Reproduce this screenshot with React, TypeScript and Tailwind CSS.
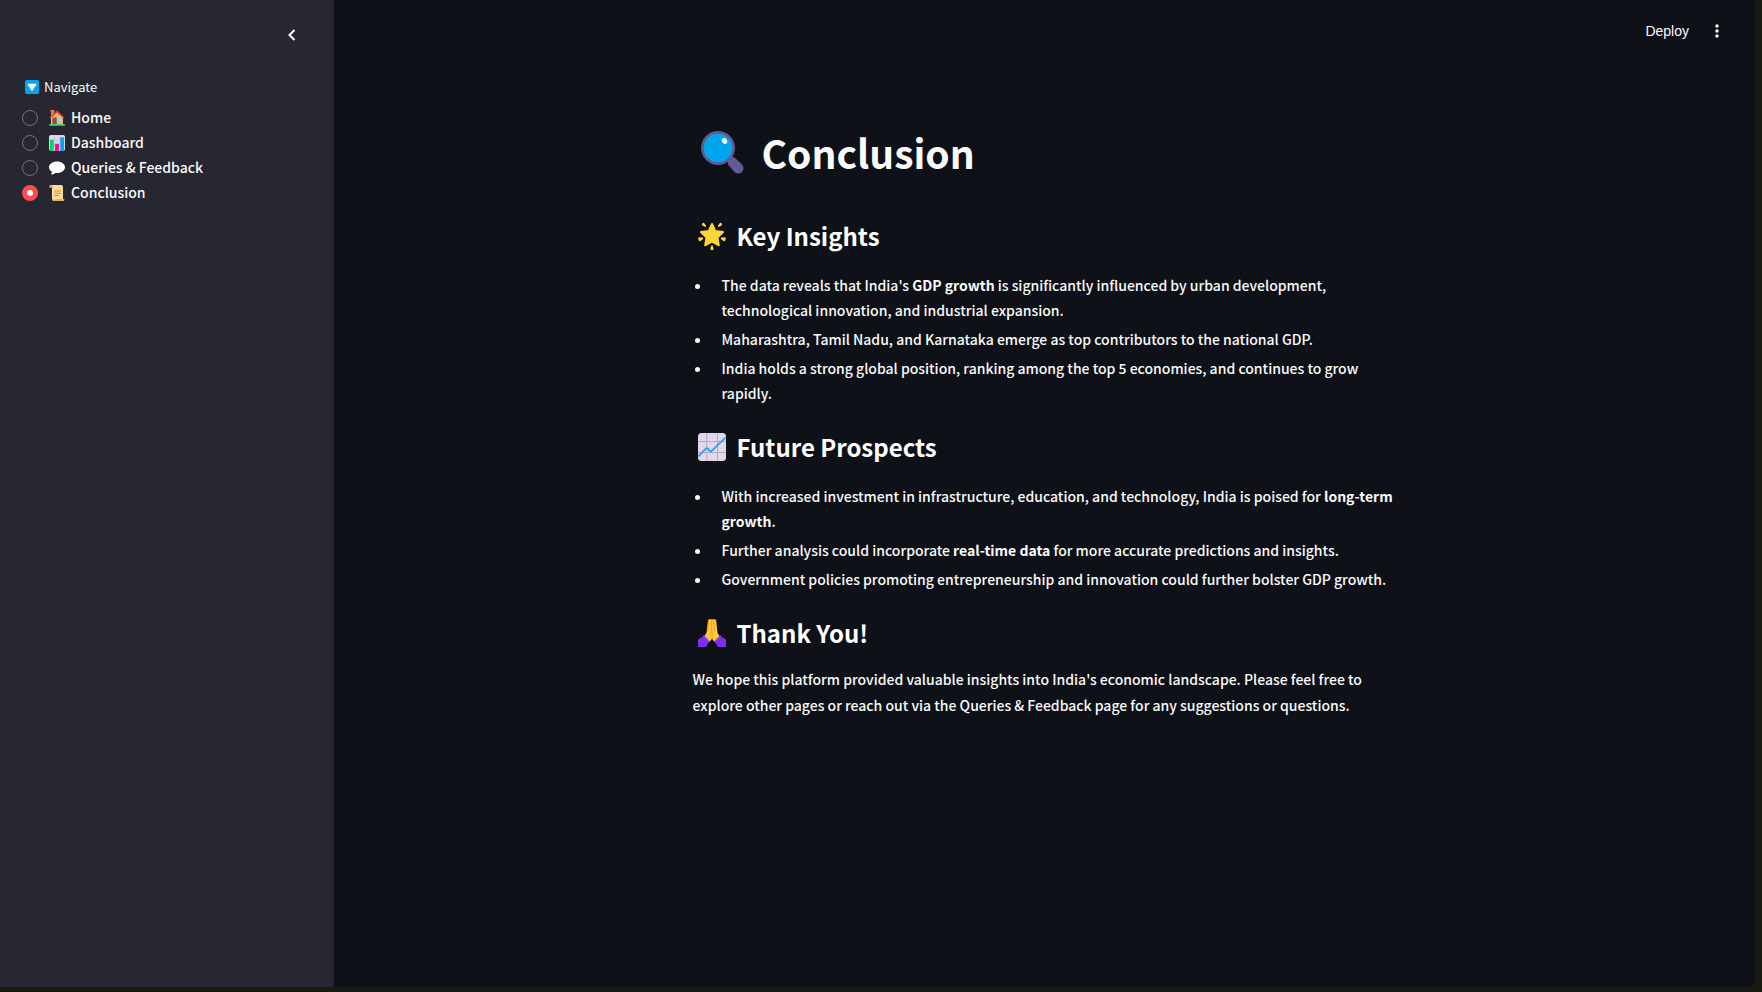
import { useState, type ReactNode } from "react";

function NavigateIcon() {
  return (
    <svg viewBox="0 0 32 32" className="size-[14px] shrink-0" aria-hidden="true">
      <rect width="32" height="32" rx="4" fill="#00a6ed" />
      <path d="M7 8.500h18c1 0 1.400.8.900 1.600l-8.700 14.400c-.6.800-1.800.800-2.400 0L6.100 10.100C5.600 9.300 6 8.500 7 8.500z" fill="#fff" />
    </svg>
  );
}

function HomeIcon() {
  return (
    <svg viewBox="0 0 32 32" className="size-4 shrink-0" aria-hidden="true">
      <path d="M4 15 16 4l12 11v14H4z" fill="#ffb161" />
      <path d="M1 15 15 1.500c.6-.6 1.400-.6 2 0L31 15l-1.600 2L16 4.500 2.600 17z" fill="#f8312f" />
      <path d="M4 2.500h6v5.200l-6 5.800z" fill="#d67d53" />
      <rect x="3" y="0" width="8" height="3.500" rx="1" fill="#ff8257" />
      <rect x="7" y="15" width="8.500" height="14" fill="#8a5140" />
      <rect x="18" y="15" width="7.500" height="7.500" rx="1" fill="#8fd4ff" />
      <rect x="0" y="28" width="32" height="3.500" rx="1.500" fill="#44d18a" />
    </svg>
  );
}

function DashboardIcon() {
  return (
    <svg viewBox="0 0 32 32" className="size-4 shrink-0" aria-hidden="true">
      <rect width="32" height="32" rx="4" fill="#e1d8ec" />
      <path d="M0 10h32M0 22h32M10.500 0v32M21.500 0v32" stroke="#b4acbc" strokeWidth="1" />
      <path d="M2 9.500h7.500V32H4c-1.200 0-2-.8-2-2z" fill="#00d26a" />
      <path d="M12.200 17.500h7.600V32h-7.600z" fill="#f70a8d" />
      <path d="M22.500 4.500H30V30c0 1.200-.8 2-2 2h-5.500z" fill="#00a6ed" />
    </svg>
  );
}

function SpeechIcon() {
  return (
    <svg viewBox="0 0 32 32" className="size-4 shrink-0" aria-hidden="true">
      <path d="M16 3C7 3 0 8 0 14.500c0 3.800 2.300 7 6 9.100 0 1.600-.7 3-1.600 4-.5.6 0 1.400.8 1.300 3.200-.3 5.700-1.600 7.400-3.100 1.100.2 2.200.2 3.400.2 9 0 16-5 16-11.500S25 3 16 3z" fill="#fff" />
    </svg>
  );
}

function ScrollIcon() {
  return (
    <svg viewBox="0 0 32 32" className="size-4 shrink-0" aria-hidden="true">
      <path d="M1 3.500C1 1.600 2.500 0 4.500 0H24c2.200 0 4 1.800 4 4v24H10c-2.200 0-4-1.800-4-4V5H2C1.400 5 1 4.500 1 3.500z" fill="#ffdb9a" />
      <path d="M1 3.500C1 1.600 2.500 0 4.500 0S8 1.600 8 3.500V5H2c-.6 0-1-.6-1-1.500z" fill="#e8ab62" />
      <path d="M11 12h12M11 16.500h12M11 21h8" stroke="#d3883e" strokeWidth="1.800" strokeLinecap="round" />
      <path d="M12 28h18c.6 0 1 .5 1 1 0 1.700-1.500 3-3.200 3H9c2 0 3-1.600 3-4z" fill="#f3ad61" />
      <path d="M6 24c0 4 .500 8 3.500 8 1.800 0 2.500-1.500 2.500-3.500V27z" fill="#ffdb9a" />
    </svg>
  );
}

function MagnifierIcon() {
  return (
    <svg viewBox="0 0 43 43" className="size-[43px] shrink-0" aria-hidden="true">
      <path d="m29 30 4-4 8 7.500a5.300 5.300 0 0 1-7.500 7.500l-7-8z" fill="#635994" />
      <path d="m26 27 3-3 5 3.500-6.500 6.500z" fill="#635994" />
      <circle cx="17" cy="17" r="17" fill="#635994" />
      <circle cx="17" cy="17" r="14.300" fill="#00a6ed" />
      <ellipse cx="23.500" cy="10" rx="2.500" ry="3.100" transform="rotate(-30 23.500 10)" fill="#fff" />
    </svg>
  );
}

function StarIcon() {
  return (
    <svg viewBox="0 0 28 28" className="size-7 shrink-0" aria-hidden="true">
      <g fill="#ffd43b">
        <path
          d="m14 2 3.300 7 7.700 1-5.500 5.500 1.300 7.800L14 19.700l-6.800 3.600 1.300-7.800L3 10l7.700-1z"
          stroke="#ffd43b"
          strokeWidth="2"
          strokeLinejoin="round"
        />
        <path d="M4.300 1.600c.3-.9 1.200-1.100 1.800-.6L8 3.400c.5.900-.4 1.800-1.300 1.400L4.400 3.500c-.6-.4-.4-1.100-.1-1.900z" />
        <path d="M23.700 1.600c-.3-.9-1.200-1.100-1.800-.6L20 3.400c-.5.900.4 1.800 1.300 1.400l2.300-1.300c.6-.4.4-1.100.1-1.900z" />
        <path d="M.3 16.800c-.3-.9.300-1.500 1-1.500l2.900.2c1 .2 1.200 1.300.4 1.900l-2.300 1.700c-.7.400-1.400.2-1.600-.5z" />
        <path d="M27.700 16.800c.3-.9-.3-1.500-1-1.500l-2.900.2c-1 .2-1.200 1.300-.4 1.900l2.300 1.700c.7.400 1.400.2 1.600-.5z" />
        <path d="M14 28c-1.200 0-1.800-.6-1.600-1.300l.7-2.700c.3-.9 1.500-.9 1.800 0l.7 2.700c.2.700-.4 1.300-1.600 1.300z" />
      </g>
    </svg>
  );
}

function TrendIcon() {
  return (
    <svg viewBox="0 0 28 28" className="size-7 shrink-0" aria-hidden="true">
      <rect width="28" height="28" rx="3.500" fill="#e1d8ec" />
      <path d="M0 8.500h28M0 19.500h28M8.800 0v28M19.500 0v28" stroke="#b4acbc" strokeWidth="1" />
      <path d="m.4 23.300 7.400-7.600c.6-.6 1.400-.6 2 0l2.200 2.300c.5.400 1 .4 1.500 0L27.800 4.300" fill="none" stroke="#26a0f0" strokeWidth="1.700" />
    </svg>
  );
}

function HandsIcon() {
  return (
    <svg viewBox="0 0 28 28" className="size-7 shrink-0" aria-hidden="true">
      <path d="M10 1.500C10.500.3 12 0 13 .6c.6-.6 1.700-.6 2.300 0 1-.6 2.400-.3 2.900.9l1.300 12.300 2.300 4-5.500 5-2.300-3-2.300 3-5.700-5 2.500-4z" fill="#ffc83d" />
      <path d="M10.600 2c-.6 3.500-.5 7-.5 10M13.500 1v10c0 2-.4 3.700-1.500 5M15.500 1.500c1 3 1.300 6 1.300 10M14.200 13v6" fill="none" stroke="#f59f0a" strokeWidth=".9" strokeLinecap="round" />
      <path d="M5.800 17 11 22.500 8.500 27c-.4.700-1 1-1.800 1H0v-7.500z" fill="#7d2df2" />
      <path d="m22.200 17-5.400 5.500 2.500 4.500c.4.700 1 1 1.800 1H28v-7.500z" fill="#7d2df2" />
      <path d="m5.800 17 5.200 5.500M22.200 17l-5.400 5.500" stroke="#8b4cf7" strokeWidth="1.600" strokeLinecap="round" />
    </svg>
  );
}

const pages = [
  { name: "Home", icon: <HomeIcon /> },
  { name: "Dashboard", icon: <DashboardIcon /> },
  { name: "Queries & Feedback", icon: <SpeechIcon /> },
  { name: "Conclusion", icon: <ScrollIcon /> },
];

function Sidebar() {
  const [page, setPage] = useState("Conclusion");
  return (
    <aside className="w-[334px] shrink-0 bg-[#262730] px-[22px]">
      <div className="flex justify-end pt-[25px] pr-[10px]">
        <button type="button" aria-label="Collapse sidebar" className="flex size-5 items-center justify-center">
          <svg viewBox="0 0 20 20" className="size-5" fill="none" stroke="#fafafa" strokeWidth="2" aria-hidden="true">
            <path d="m12.500 5-5 5 5 5" />
          </svg>
        </button>
      </div>
      <fieldset className="mt-8">
        <legend className="flex h-5 items-center gap-[5px] pl-[3px] text-[13px] leading-5">
          <NavigateIcon />
          Navigate
        </legend>
        <div className="mt-2 flex flex-col">
          {pages.map(({ name, icon }) => (
            <label key={name} className="flex h-[25px] items-center text-[14px] leading-[25px] font-medium">
              <input
                type="radio"
                name="page"
                checked={page === name}
                onChange={() => setPage(name)}
                className="mr-[11px] size-4 shrink-0 appearance-none rounded-full border border-[#72737b] bg-[#262730] checked:border-[5px] checked:border-[#ff4b4b] checked:bg-white"
              />
              {icon}
              <span className="ml-[6px]">{name}</span>
            </label>
          ))}
        </div>
      </fieldset>
    </aside>
  );
}

function Section({ icon, title, children }: { icon: ReactNode; title: string; children: ReactNode }) {
  return (
    <section>
      <h2 className="flex h-9 items-center gap-[11px] pl-[5px] text-[24px] leading-9 font-bold text-white">
        {icon}
        {title}
      </h2>
      {children}
    </section>
  );
}

function Bullets({ children }: { children: ReactNode }) {
  return (
    <ul className="mt-[19px] flex list-disc flex-col gap-1 pl-[19px] text-[14px] leading-[25px] font-medium *:pl-[10px]">
      {children}
    </ul>
  );
}

export default function App() {
  return (
    <div className="flex min-h-screen bg-[#181a12] pr-[7px] pb-[5px] font-['Noto_Sans_CJK_SC','Noto_Sans',sans-serif] text-[#fafafa]">
      <Sidebar />
      <div className="flex min-w-0 flex-1 flex-col rounded-br-md bg-[#0e1117]">
        <header className="flex h-[62px] items-center justify-end gap-5 pr-[30px] font-['Liberation_Sans',sans-serif] text-sm">
          <button type="button">Deploy</button>
          <button type="button" aria-label="Main menu" className="flex size-4 items-center justify-center">
            <svg viewBox="0 0 16 16" className="size-4" fill="#fafafa" aria-hidden="true">
              <circle cx="8" cy="3" r="1.700" />
              <circle cx="8" cy="8" r="1.700" />
              <circle cx="8" cy="13" r="1.700" />
            </svg>
          </button>
        </header>
        <main className="mx-auto w-full max-w-[704px] pt-[61px]">
          <h1 className="flex h-[58px] items-center gap-[18px] pl-2 text-[39px] leading-[58px] font-bold">
            <MagnifierIcon />
            Conclusion
          </h1>
          <div className="mt-[37px] flex flex-col gap-[23px]">
            <Section icon={<StarIcon />} title="Key Insights">
              <Bullets>
                <li>
                  The data reveals that India's <strong>GDP growth</strong> is significantly influenced by urban
                  development, technological innovation, and industrial expansion.
                </li>
                <li>Maharashtra, Tamil Nadu, and Karnataka emerge as top contributors to the national GDP.</li>
                <li>
                  India holds a strong global position, ranking among the top 5 economies, and continues to grow
                  rapidly.
                </li>
              </Bullets>
            </Section>
            <Section icon={<TrendIcon />} title="Future Prospects">
              <Bullets>
                <li>
                  With increased investment in infrastructure, education, and technology, India is poised for{" "}
                  <strong>long-term growth</strong>.
                </li>
                <li>
                  Further analysis could incorporate <strong>real-time data</strong> for more accurate predictions and
                  insights.
                </li>
                <li>Government policies promoting entrepreneurship and innovation could further bolster GDP growth.</li>
              </Bullets>
            </Section>
            <Section icon={<HandsIcon />} title="Thank You!">
              <p className="mt-[15px] text-[14px] leading-[26px] font-medium">
                We hope this platform provided valuable insights into India's economic landscape. Please feel free to
                explore other pages or reach out via the Queries & Feedback page for any suggestions or questions.
              </p>
            </Section>
          </div>
        </main>
      </div>
    </div>
  );
}
